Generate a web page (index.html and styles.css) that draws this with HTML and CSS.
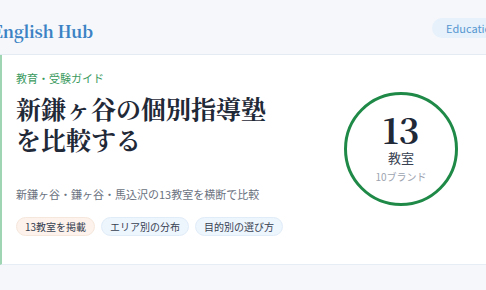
FILE: index.html
```html
<!DOCTYPE html>
<html lang="ja">

<head>
    <meta charset="UTF-8">
    <meta name="viewport" content="width=device-width, initial-scale=1.0">
    <title> English Hub </title>

    <link rel="stylesheet" href="styles.css">
</head>

<body>
    <div id="wrap">
        <div class="header">
            <a href="#" class="logo">English Hub</a>
            <span class="header_tag">Education</span>
        </div>
        <div class="hero">
            <div class="hero_text">
                <p class="hero_label">教育・受験ガイド</p>
                <h1 class="hero_title">新鎌ヶ谷の個別指導塾<br>を比較する</h1>
                <p class="hero_desc">新鎌ヶ谷・鎌ヶ谷・馬込沢の13教室を横断で比較</p>
                <ul class="hero_tags">
                    <li class="tag tag_orange">13教室を掲載</li>
                    <li class="tag">エリア別の分布</li>
                    <li class="tag">目的別の選び方</li>
                </ul>
            </div>
            <div class="hero_count">
                <strong>13</strong>
                <span class="count_unit">教室</span>
                <span class="count_sub">10ブランド</span>
            </div>
        </div>
    </div>
</body>

</html>
```

FILE: styles.css
```css
* {
    margin: 0;
    padding: 0;
    box-sizing: border-box;
}

ul li {
    list-style: none;
}

a {
    text-decoration: none;
}

body {
    background-color: #f5f7fb;
    font-family: "Noto Sans CJK JP", "Noto Sans", sans-serif;
    overflow: hidden;
}

#wrap {
    width: 486px;
}

.header {
    height: 55px;
    display: flex;
    align-items: center;
    justify-content: space-between;
    border-bottom: 1px solid #e4ebf3;
    padding-top: 1px;
}

.logo {
    margin-left: -8px;
    margin-top: 7px;
    font-family: "Noto Serif CJK JP", "DejaVu Serif", "Liberation Serif", serif;
    font-size: 16.5px;
    font-weight: bold;
    color: #3b82c4;
    letter-spacing: -0.2px;
}

.header_tag {
    margin-right: -26px;
    padding: 3px 14px 3px 14px;
    border-radius: 12px;
    background-color: #e6f1fb;
    color: #5596d0;
    font-size: 11px;
    line-height: 14px;
}

.hero {
    height: 210px;
    display: flex;
    justify-content: space-between;
    background-color: #fff;
    border-left: 2px solid #9fd5b2;
    border-bottom: 1px solid #e6edf4;
    padding: 15px 28px 0 14px;
}

.hero_label {
    font-size: 11px;
    line-height: 16px;
    color: #3a9a5e;
}

.hero_title {
    margin-top: 7px;
    font-family: "Noto Serif CJK JP", "DejaVu Serif", serif;
    font-size: 25px;
    line-height: 31px;
    font-weight: bold;
    color: #1f2937;
}

.hero_desc {
    margin-top: 30px;
    font-size: 11px;
    line-height: 18px;
    color: #6b7280;
}

.hero_tags {
    margin-top: 14px;
    display: flex;
    gap: 6px;
}

.tag {
    padding: 0 8px;
    height: 19px;
    line-height: 17px;
    font-size: 10px;
    color: #374151;
    background-color: #edf5fd;
    border: 1px solid #e0ecf8;
    border-radius: 10px;
}

.tag_orange {
    background-color: #fdf3ec;
    border-color: #f6e7dc;
}

.hero_count {
    margin-top: 22px;
    width: 114px;
    height: 114px;
    border: 3.5px solid #1f8a48;
    border-radius: 50%;
    display: flex;
    flex-direction: column;
    align-items: center;
    justify-content: center;
}

.hero_count strong {
    margin-top: -4px;
    font-family: "Noto Serif CJK JP", "DejaVu Serif", serif;
    font-size: 35px;
    line-height: 36px;
    color: #1f2937;
}

.count_unit {
    margin-top: 2px;
    font-size: 13px;
    line-height: 18px;
    color: #374151;
}

.count_sub {
    margin-top: 3px;
    font-size: 10px;
    line-height: 14px;
    color: #9ca3af;
}
```
